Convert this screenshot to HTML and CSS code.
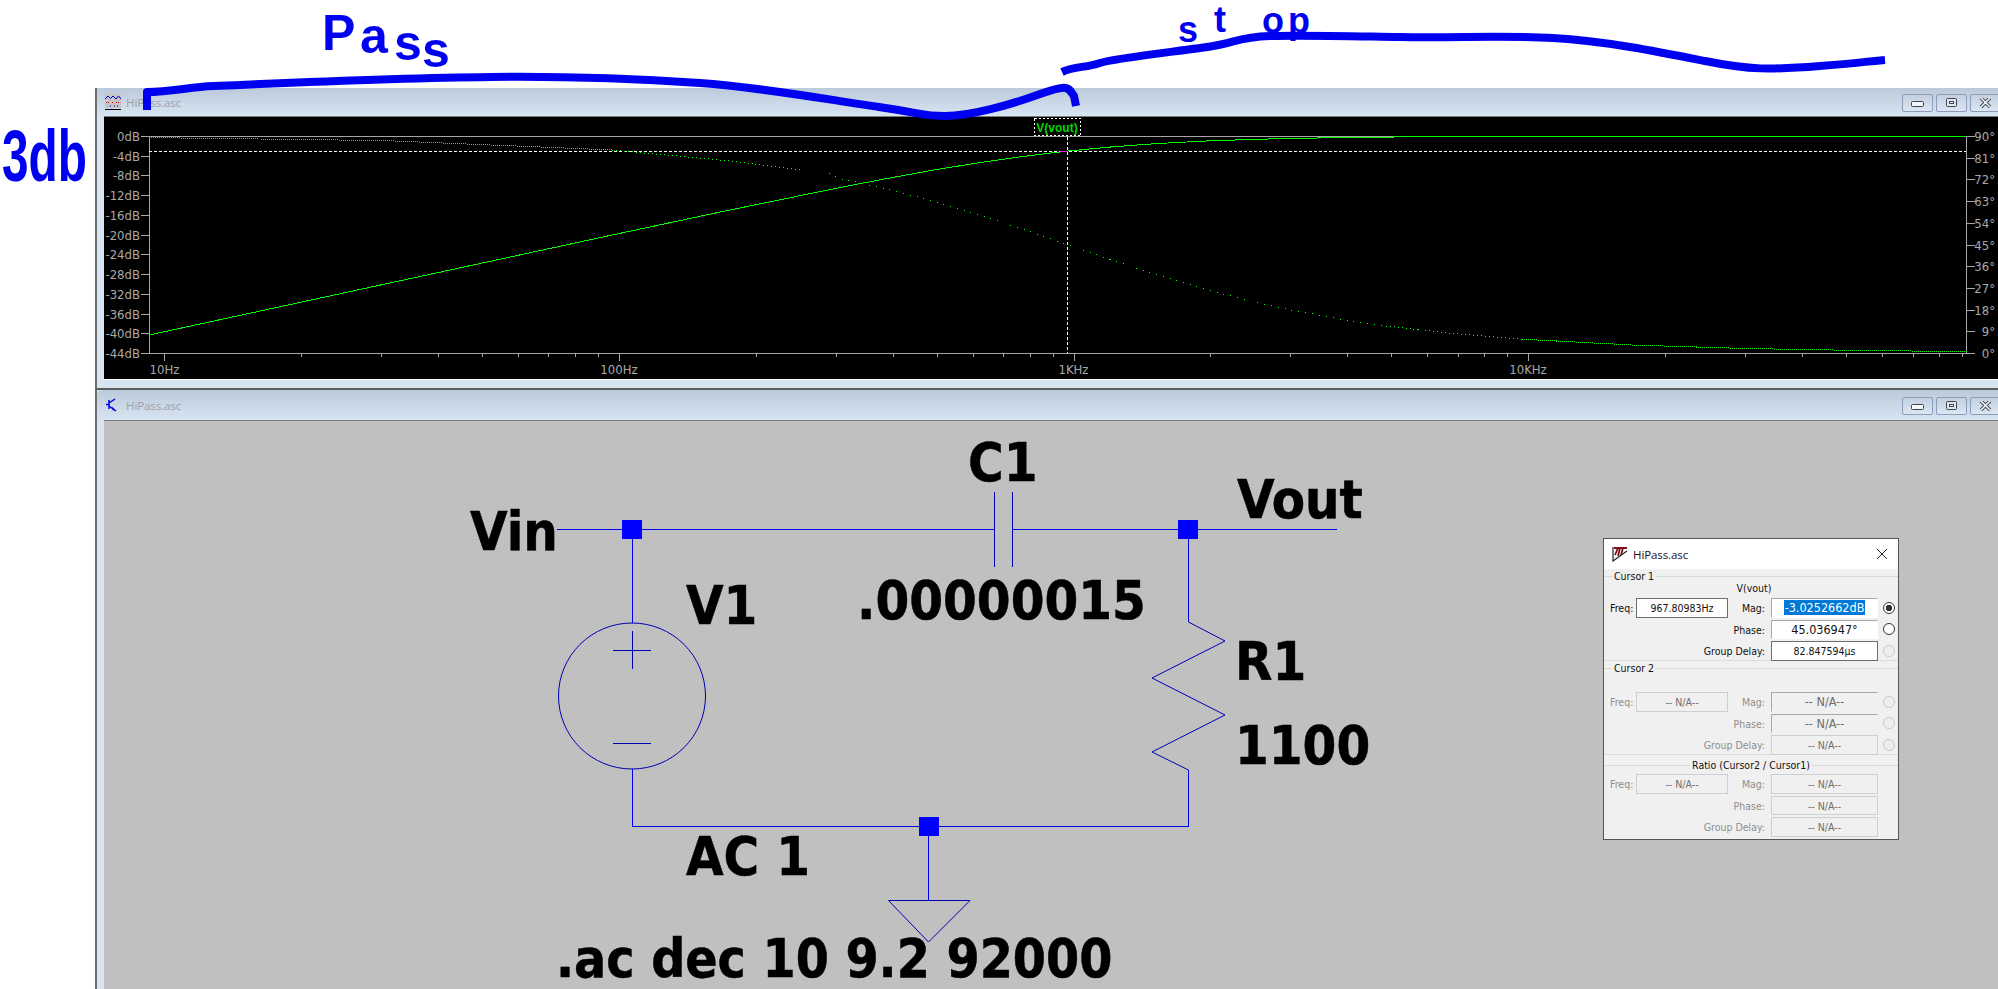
FILE: index.html
```html
<!DOCTYPE html>
<html lang="en">
<head>
<meta charset="utf-8">
<title>HiPass.asc</title>
<link rel="stylesheet" href="styles.css">
</head>
<body>
<main class="desk">
  <section class="win plot-win">
    <header class="titlebar">
      <svg class="ticon" viewBox="0 0 16 16"><rect width="16" height="14" fill="#c4c4c4"/><path d="M0 5 3 2 5.500 4.500 8 2 11 5 13.500 2 16 5" fill="none" stroke="#0000d0"/><path d="M1 8.500h4M7 8.500h2M11 8.500h3" stroke="#e00000" stroke-dasharray="1 1"/><path d="M5 12h1M9 12h1M12 12h1" stroke="#0000d0"/><path d="M0 15.500h16" stroke="#000"/></svg>
      <span class="ttext">HiPass.asc</span>
      <div class="tbtns">
        <button class="tbtn" type="button" aria-label="Minimize"><svg viewBox="0 0 16 10"><rect x="1.500" y="3.500" width="12" height="5" rx="1" fill="#f4f6f8" stroke="#3c4450"/></svg></button>
        <button class="tbtn" type="button" aria-label="Restore"><svg viewBox="0 0 16 10"><rect x="2.500" y="0.500" width="10" height="8" rx="1" fill="#dfe6ee" stroke="#3c4450"/><rect x="5.500" y="3.500" width="4" height="2" fill="#fff" stroke="#3c4450"/></svg></button>
        <button class="tbtn" type="button" aria-label="Close"><svg viewBox="0 0 16 10"><path d="M3 0 12 9M12 0 3 9" stroke="#3c4450" stroke-width="3.400"/><path d="M3 0 12 9M12 0 3 9" stroke="#f4f6f8" stroke-width="1.600"/></svg></button>
      </div>
    </header>
    <div class="plot">
      <svg class="canvas" viewBox="104 117 1894 262" width="1894" height="262">
        <path class="axis" d="M149.500 136.500H1966.500V353.500H149.500Z"/>
        <path class="axis" d="M141 136.500h8M141 156.500h8M141 175.500h8M141 195.500h8M141 215.500h8M141 235.500h8M141 254.500h8M141 274.500h8M141 294.500h8M141 314.500h8M141 333.500h8M141 353.500h8"/>
        <path class="axis" d="M1967 136.500h8M1967 158.500h8M1967 179.500h8M1967 201.500h8M1967 223.500h8M1967 245.500h8M1967 266.500h8M1967 288.500h8M1967 310.500h8M1967 331.500h8M1967 353.500h8"/>
        <path class="axis" d="M164.500 353v8M619.500 353v8M1074.500 353v8M1528.500 353v8"/>
        <path class="axis" d="M301.500 353v4M381.500 353v4M438.500 353v4M482.500 353v4M518.500 353v4M548.500 353v4M575.500 353v4M598.500 353v4M756.500 353v4M836.500 353v4M893.500 353v4M937.500 353v4M973.500 353v4M1003.500 353v4M1030.500 353v4M1053.500 353v4M1210.500 353v4M1290.500 353v4M1347.500 353v4M1391.500 353v4M1427.500 353v4M1458.500 353v4M1484.500 353v4M1507.500 353v4M1665.500 353v4M1745.500 353v4M1802.500 353v4M1846.500 353v4M1882.500 353v4M1913.500 353v4M1939.500 353v4M1962.500 353v4"/>

        <g class="ylabels">
          <text x="140" y="141">0dB</text><text x="140" y="161">-4dB</text><text x="140" y="180">-8dB</text><text x="140" y="200">-12dB</text><text x="140" y="220">-16dB</text><text x="140" y="240">-20dB</text><text x="140" y="259">-24dB</text><text x="140" y="279">-28dB</text><text x="140" y="299">-32dB</text><text x="140" y="319">-36dB</text><text x="140" y="338">-40dB</text><text x="140" y="358">-44dB</text>
        </g>
        <g class="rlabels">
          <text x="1995" y="141">90°</text><text x="1995" y="163">81°</text><text x="1995" y="184">72°</text><text x="1995" y="206">63°</text><text x="1995" y="228">54°</text><text x="1995" y="250">45°</text><text x="1995" y="271">36°</text><text x="1995" y="293">27°</text><text x="1995" y="315">18°</text><text x="1995" y="336">9°</text><text x="1995" y="358">0°</text>
        </g>
        <g class="xlabels">
          <text x="164.500" y="374">10Hz</text><text x="619" y="374">100Hz</text><text x="1073.500" y="374">1KHz</text><text x="1528" y="374">10KHz</text>
        </g>

        <path class="cursor" d="M149 151.500H1966M1067.500 137V353"/>
        <polyline class="phase dense" points="149,137.600 384.700,140.600 612.200,150"/>
        <polyline class="phase mid" points="612.200,150 725.900,160.600 803,170"/>
        <polyline class="phase sparse" points="829,173 839.700,178.500 885.200,188.500 930.700,200.300 976.200,213.900 1021.700,228.900 1067.200,244.600 1112.700,260.400 1158.200,275.300 1203.700,289 1249.200,300.700 1294.700,310.700 1340.200,319 1385.700,326"/>
        <polyline class="phase mid" points="1385.700,326 1454,333.600 1522.200,339.200"/>
        <polyline class="phase dense" points="1522.200,339.200 1636,345.200 1749.700,348.600 1863,350.500 1966.600,351.600"/>
        <polyline class="mag" points="148.700,335.100 384.700,284.100 612.200,235 725.900,210.800 839.700,187.600 885.200,178.800 930.700,170.600 976.200,163.100 1021.700,156.600 1067.200,151.100 1112.700,146.800 1158.200,143.500 1203.700,141.100 1249.200,139.500 1294.700,138.300 1385.700,137.100 1438,136.500 1966,136.500"/>
        <path class="marker" d="M1060 151.500h7"/>
        <rect class="tracebox" x="1034.500" y="118.500" width="46" height="17"/>
        <text class="tracename" x="1057" y="132">V(vout)</text>
      </svg>
    </div>
    <div class="plot-foot"></div>
  </section>

  <section class="win sch-win">
    <header class="titlebar sch-title">
      <svg class="ticon" viewBox="0 0 16 16"><path d="M4 3V12M1 7.500H4M4 6 10 2M4 9 11 14" fill="none" stroke="#0000e0" stroke-width="1.500"/><path d="M7 9.500 11 14 7.500 13Z" fill="#0000e0"/></svg>
      <span class="ttext">HiPass.asc</span>
      <div class="tbtns">
        <button class="tbtn" type="button" aria-label="Minimize"><svg viewBox="0 0 16 10"><rect x="1.500" y="3.500" width="12" height="5" rx="1" fill="#f4f6f8" stroke="#3c4450"/></svg></button>
        <button class="tbtn" type="button" aria-label="Restore"><svg viewBox="0 0 16 10"><rect x="2.500" y="0.500" width="10" height="8" rx="1" fill="#dfe6ee" stroke="#3c4450"/><rect x="5.500" y="3.500" width="4" height="2" fill="#fff" stroke="#3c4450"/></svg></button>
        <button class="tbtn" type="button" aria-label="Close"><svg viewBox="0 0 16 10"><path d="M3 0 12 9M12 0 3 9" stroke="#3c4450" stroke-width="3.400"/><path d="M3 0 12 9M12 0 3 9" stroke="#f4f6f8" stroke-width="1.600"/></svg></button>
      </div>
    </header>
    <div class="schematic">
      <svg class="canvas" viewBox="104 421 1894 568" width="1894" height="568">
        <path class="wire" d="M557 529.500H994.500M1012.500 529.500H1337M632.500 529.500V623M632.500 769V826.500H1188.500V770M1188.500 529.500V622M928.500 826.500V900"/>
        <path class="sym" d="M994.500 492V567M1012.500 492V567"/>
        <ellipse class="sym" cx="632" cy="696" rx="73.500" ry="73"/>
        <path class="sym" d="M613 650.500H651M632.500 631V669M613 743.500H651"/>
        <path class="sym" d="M1188.500 622 1225 641 1152 678 1225 715 1152 752 1188.500 770"/>
        <path class="sym" d="M888.500 900.500H970L928.500 942Z"/>
        <rect class="node" x="622" y="520" width="20" height="19"/>
        <rect class="node" x="1178" y="520" width="20" height="19"/>
        <rect class="node" x="919" y="817" width="20" height="19"/>
        <text class="net" x="470" y="550">Vin</text>
        <text class="net" x="968" y="480.500">C1</text>
        <text class="net" x="1237" y="518">Vout</text>
        <text class="net" x="686" y="623.500">V1</text>
        <text class="net" x="857" y="619">.00000015</text>
        <text class="net" x="1235" y="679.500">R1</text>
        <text class="net" x="1235" y="764">1100</text>
        <text class="net" x="686" y="874.500">AC 1</text>
        <text class="net spice" x="556" y="977">.ac dec 10 9.2 92000</text>
      </svg>
    </div>
  </section>
</main>

<aside class="dialog">
  <header class="dlg-title">
    <svg class="dlg-icon" viewBox="0 0 16 16"><path d="M1 1V15L15 5" fill="none" stroke="#222" stroke-width="1.200"/><path d="M2 2H15M8 2 6 10M3 9 6 2M11 2 9 9" fill="none" stroke="#7a0f1e" stroke-width="1.800"/></svg>
    <span class="dlg-name">HiPass.asc</span>
    <svg class="dlg-close" viewBox="0 0 12 12"><path d="M1 1 11 11M11 1 1 11" stroke="#222"/></svg>
  </header>

  <section class="sec sec-one">
    <h3 class="legend"><span>Cursor 1</span></h3>
    <p class="signal">V(vout)</p>
    <div class="rows">
      <span class="lbl">Freq:</span><span class="val solid">967.80983Hz</span><span class="lbl mag-lbl">Mag:</span><span class="val sunken big"><mark class="sel">-3.0252662dB</mark></span><span class="radio on"></span>
      <span class="lbl wide">Phase:</span><span class="val sunken big">45.036947°</span><span class="radio live"></span>
      <span class="lbl wide">Group Delay:</span><span class="val solid">82.847594µs</span><span class="radio"></span>
    </div>
  </section>

  <section class="sec sec-two">
    <h3 class="legend"><span>Cursor 2</span></h3>
    <div class="rows off">
      <span class="lbl">Freq:</span><span class="val flat">-- N/A--</span><span class="lbl mag-lbl">Mag:</span><span class="val dim big">-- N/A--</span><span class="radio"></span>
      <span class="lbl wide">Phase:</span><span class="val dim big">-- N/A--</span><span class="radio"></span>
      <span class="lbl wide">Group Delay:</span><span class="val flat">-- N/A--</span><span class="radio"></span>
    </div>
  </section>

  <section class="sec sec-three">
    <h3 class="legend centered"><span>Ratio (Cursor2 / Cursor1)</span></h3>
    <div class="rows off">
      <span class="lbl">Freq:</span><span class="val flat">-- N/A--</span><span class="lbl mag-lbl">Mag:</span><span class="val flat">-- N/A--</span><span></span>
      <span class="lbl wide">Phase:</span><span class="val flat">-- N/A--</span><span></span>
      <span class="lbl wide">Group Delay:</span><span class="val flat">-- N/A--</span><span></span>
    </div>
  </section>
</aside>

<svg class="ink" viewBox="0 0 1998 989" width="1998" height="989">
  <path class="stroke" d="M147 110V92C170 92 190 87 213 86S400 78 491 77 640 79 700 83 830 100 879 107 920 116 945 116 1010 105 1040 94 1068 88 1074 96L1076 106"/>
  <path class="stroke" d="M1062 72C1075 66 1085 68 1100 63S1190 50 1213 46 1240 37 1270 36 1340 36 1400 37 1500 35 1553 38 1660 52 1705 61 1770 70 1820 66 1860 62 1885 60"/>
  <text class="hand h3db" x="0" y="0" transform="translate(2 181) scale(.664 1)">3db</text>
  <text class="hand hpass" x="322 360 394 422" y="50 53 60 67">Pass</text>
  <text class="hand hstop" x="1178 1214 1262 1288" y="42 32 33 33">stop</text>
</svg>
</body>
</html>
```
FILE: styles.css
```css
* { box-sizing: border-box; }
html, body { margin: 0; height: 100%; }
body {
  width: 1998px;
  height: 989px;
  overflow: hidden;
  background: #fff;
  position: relative;
  font-family: "Liberation Sans", Arial, sans-serif;
}
.desk {
  height: 989px;
  padding: 88px 0 0 95px;
  display: flex;
  flex-direction: column;
}
.win {
  border-left: 2px solid #6e6e6e;
  background: #d7e4f2;
  width: 1903px;
}
.plot-win { height: 302px; border-bottom: 2px solid #5c5c5c; flex: none; }
.sch-win { flex: 1; min-height: 0; display: flex; flex-direction: column; }
.titlebar {
  height: 28px;
  display: flex;
  align-items: center;
  padding-left: 8px;
  background: linear-gradient(#bbcadb, #d7e4f2);
}
.sch-title { height: 30px; border-top-left-radius: 5px; flex: none; }
.ticon { width: 16px; height: 16px; flex: none; }
.ttext {
  margin-left: 5px;
  font-family: "Open Sans", "Liberation Sans", sans-serif;
  font-size: 11.500px;
  letter-spacing: -.1px;
  color: #9aa0a8;
}
.tbtns { margin-left: auto; margin-right: -3px; display: flex; gap: 3px; margin-top: 1px; }
.tbtn {
  width: 31px;
  height: 18px;
  padding: 0;
  border: 1px solid #8b9db8;
  border-radius: 2px;
  background: linear-gradient(#c3d0e0, #dbe6f2);
  display: flex;
  align-items: center;
  justify-content: center;
}
.tbtn svg { width: 16px; height: 10px; display: block; }
.plot {
  margin-left: 7px;
  height: 264px;
  border-top: 1px solid #7a7a7a;
  border-bottom: 1px solid #fff;
  background: #000;
}
.plot-foot { height: 8px; }
.canvas { display: block; }
.axis { fill: none; stroke: #a6a6a6; stroke-width: 1; shape-rendering: crispEdges; }
.ylabels text, .rlabels text, .xlabels text {
  font-family: "DejaVu Sans Condensed", "DejaVu Sans", "Liberation Sans", sans-serif;
  font-stretch: condensed;
  font-size: 13px;
  fill: #a8a8a8;
}
.ylabels text, .rlabels text { text-anchor: end; }
.xlabels text { text-anchor: middle; }
.cursor { fill: none; stroke: #fff; stroke-dasharray: 3 2; shape-rendering: crispEdges; }
.phase { fill: none; stroke: #00ff00; shape-rendering: crispEdges; }
.dense { stroke-dasharray: 1 1; }
.mid { stroke-dasharray: 1 3; }
.sparse { stroke-dasharray: 1 6; }
.mag { fill: none; stroke: #00ff00; shape-rendering: crispEdges; }
.marker { stroke: #e020e0; shape-rendering: crispEdges; }
.tracebox { fill: none; stroke: #fff; stroke-dasharray: 2 2; shape-rendering: crispEdges; }
.tracename {
  font-family: "Liberation Sans", sans-serif;
  font-weight: 700;
  font-size: 12px;
  fill: #00d800;
  text-anchor: middle;
}
.schematic {
  flex: 1;
  min-height: 0;
  margin-left: 7px;
  border-top: 1px solid #7a7a7a;
  background: #c0c0c0;
}
.wire { fill: none; stroke: #0000f0; shape-rendering: crispEdges; }
.sym { fill: none; stroke: #0000b0; }
.node { fill: #0000ff; }
.net {
  font-family: "DejaVu Sans Condensed", "DejaVu Sans", "Liberation Sans", sans-serif;
  font-stretch: condensed;
  font-weight: 700;
  font-size: 54px;
  fill: #000;
  stroke: #000;
  stroke-width: .5px;
}
.spice { font-size: 53px; }

.dialog {
  position: absolute;
  left: 1603px;
  top: 538px;
  width: 296px;
  height: 302px;
  border: 1px solid #555;
  background: #f0f0f0;
  font-family: "DejaVu Sans Condensed", "DejaVu Sans", "Liberation Sans", sans-serif;
  font-stretch: condensed;
  font-size: 10.500px;
  color: #111;
  display: flex;
  flex-direction: column;
}
.dlg-title {
  height: 30px;
  flex: none;
  background: #fff;
  display: flex;
  align-items: center;
  padding: 0 8px 0 8px;
}
.dlg-icon { width: 16px; height: 16px; }
.dlg-name { margin-left: 5px; font-family: "Open Sans", "Liberation Sans", sans-serif; font-stretch: normal; font-size: 11.500px; letter-spacing: -.1px; color: #1d1020; }
.dlg-close { width: 12px; height: 12px; margin-left: auto; margin-right: 2px; }
.sec { border-bottom: 1px solid #dcdcdc; flex: none; }
.sec-one { height: 92px; }
.sec-two { height: 94px; }
.sec-three { border-bottom: 0; padding-top: 3px; }
.legend {
  margin: 0;
  height: 14px;
  font-size: 10.500px;
  font-weight: 400;
  line-height: 14px;
  display: flex;
  align-items: center;
  color: #111;
}
.legend::before { content: ""; width: 8px; border-top: 1px solid #d8d8d8; }
.legend::after { content: ""; flex: 1; border-top: 1px solid #d8d8d8; }
.legend span { padding: 0 2px; }
.legend.centered::before { flex: 1; width: auto; }
.signal { margin: 0; height: 15px; line-height: 11px; padding-top: 0; text-align: center; margin-left: 6px; }
.rows {
  display: grid;
  grid-template-columns: 23px 92px 37px 107px 12px;
  column-gap: 3px;
  grid-auto-rows: 19.500px;
  row-gap: 2px;
  padding-left: 6px;
}
.sec-two .rows { margin-top: 17px; }
.sec-three .rows { margin-top: 2px; }
.lbl { text-align: right; line-height: 20px; }
.mag-lbl { margin-right: 3px; }
.lbl.wide { grid-column: 1 / 4; margin-right: 3px; }
.val {
  text-align: center;
  line-height: 18px;
  border: 1px solid transparent;
  white-space: nowrap;
  background: #fff;
}
.big { font-size: 12.500px; }
.solid { border-color: #6e6e6e; }
.sunken { border-top-color: #a8a8a8; border-left-color: #a8a8a8; }
.sel { background: #0078d7; color: #fff; padding: 0 1px; }
.flat { background: #f0f0f0; border-color: #cfcfcf; }
.dim { background: #f0f0f0; border-top-color: #a8a8a8; border-left-color: #a8a8a8; }
.off { color: #8e8e8e; }
.off .val { color: #6d6d6d; }
.radio {
  width: 12px;
  height: 12px;
  align-self: center;
  margin-left: 2px;
  border-radius: 50%;
  border: 1px solid #c8c8c8;
  background: #eee;
}
.radio.live { border-color: #333; background: #fff; }
.radio.on { border-color: #333; background: radial-gradient(circle, #333 0 3px, #fff 3.500px); }

.ink { position: absolute; left: 0; top: 0; pointer-events: none; }
.stroke { fill: none; stroke: #0000f0; stroke-width: 8; stroke-linejoin: round; }
.hand {
  font-family: "Liberation Sans", Arial, sans-serif;
  font-weight: 700;
  fill: #0000f0;
}
.h3db { font-size: 72px; }
.hpass { font-size: 50px; }
.hstop { font-size: 36px; }
```
